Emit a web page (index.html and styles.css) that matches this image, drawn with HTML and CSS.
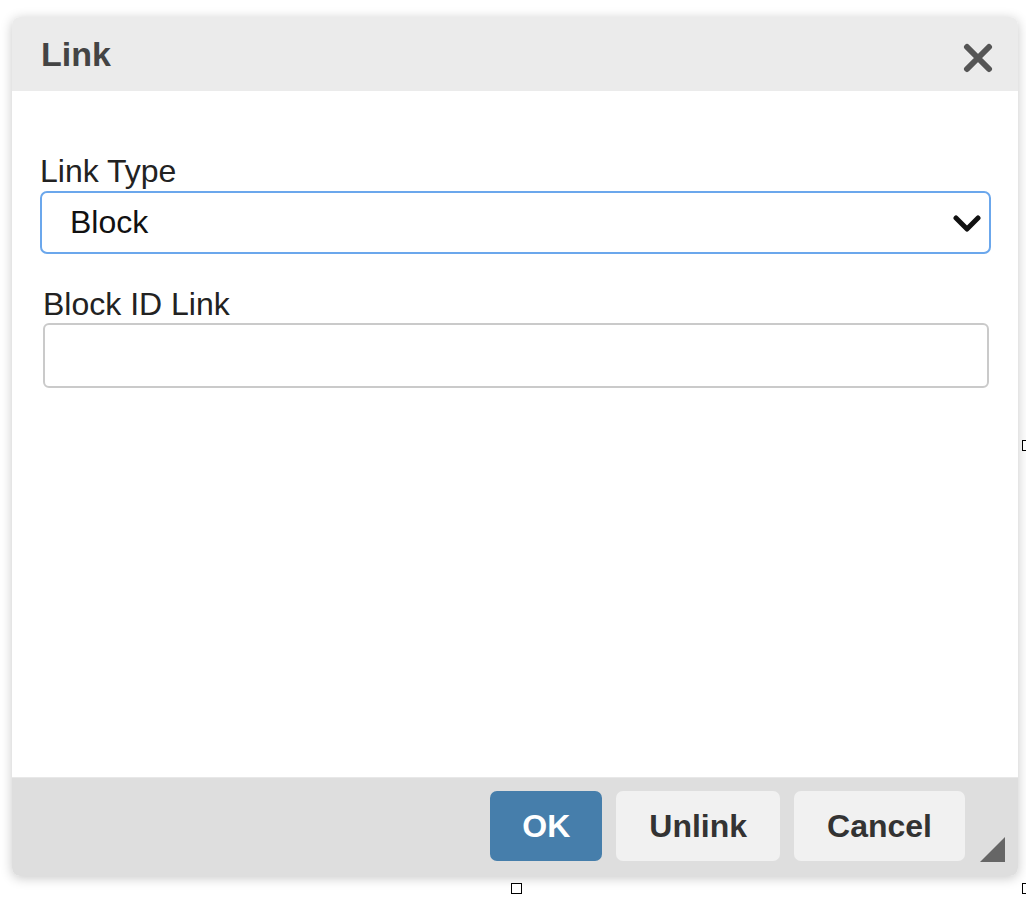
FILE: index.html
```html
<!DOCTYPE html>
<html lang="en">

<head>
  <meta charset="UTF-8">
  <meta name="viewport" content="width=device-width, initial-scale=1.0">
  <title>Link</title>
  <link rel="stylesheet" href="styles.css">
</head>

<body>
  <div class="page">
    <div class="dialog">
      <div class="dialog__head">
        <h2 class="dialog__title">Link</h2>
        <button class="close" type="button" aria-label="Close">
          <svg width="30" height="30" viewBox="0 0 30 30">
            <path d="M4 4 L26 26 M26 4 L4 26" stroke="#555" stroke-width="6" stroke-linecap="round" fill="none" />
          </svg>
        </button>
      </div>

      <div class="dialog__body">
        <div class="field">
          <label class="field__label">Link Type</label>
          <div class="select">
            <span>Block</span>
            <svg width="28" height="18" viewBox="0 0 28 18">
              <path d="M3 3 L14 14 L25 3" stroke="#111" stroke-width="5" stroke-linecap="round" stroke-linejoin="round" fill="none" />
            </svg>
          </div>
        </div>
        <div class="field field--inset">
          <label class="field__label" for="blockid">Block ID Link</label>
          <input type="text" id="blockid" class="text_input">
        </div>
      </div>

      <div class="dialog__foot">
        <button class="btn btn--primary" type="button">OK</button>
        <button class="btn" type="button">Unlink</button>
        <button class="btn" type="button">Cancel</button>
        <span class="resize"></span>
      </div>
    </div>

    <!-- resize handles of the element behind -->
    <span class="handle handle--bottom"></span>
    <span class="handle handle--corner"></span>
    <span class="handle handle--side"></span>
  </div>
</body>

</html>
```

FILE: styles.css
```css
body {
  margin: 0;
  background-color: #fff;
  font-family: "Liberation Sans", Arial, Helvetica, sans-serif;
}

.page {
  position: relative;
  width: 1026px;
  height: 904px;
  overflow: hidden;
  padding: 17px 0 0 12px;
  box-sizing: border-box;
}

.dialog {
  display: flex;
  flex-direction: column;
  width: 1006px;
  height: 859px;
  border-radius: 8px;
  overflow: hidden;
  background-color: #fff;
  box-shadow: 0 2px 12px rgba(0, 0, 0, 0.22);
}

.dialog__head {
  display: flex;
  align-items: center;
  justify-content: space-between;
  height: 74px;
  padding: 0 25px 0 29px;
  background-color: #ebebeb;
}

.dialog__title {
  margin: 0;
  font-size: 34px;
  font-weight: 700;
  color: #444;
}

.close {
  display: flex;
  padding: 0;
  margin-top: 8px;
  border: none;
  background: none;
  cursor: pointer;
}

.dialog__body {
  flex: 1;
  padding: 62px 27px 0 28px;
}

.field {
  display: flex;
  flex-direction: column;
  gap: 2px;
  margin-bottom: 32px;
}

.field--inset {
  padding: 0 2px 0 3px;
  gap: 1px;
}

.field__label {
  font-size: 32px;
  line-height: 36px;
  color: #222;
}

.select {
  display: flex;
  align-items: center;
  justify-content: space-between;
  height: 63px;
  padding: 0 8px 0 28px;
  box-sizing: border-box;
  border: 2px solid #6ba7ec;
  border-radius: 7px;
  font-size: 32px;
  color: #111;
}

.select svg {
  margin-top: 2px;
}

.text_input {
  height: 65px;
  box-sizing: border-box;
  border: 2px solid #cacaca;
  border-radius: 6px;
  font-size: 32px;
}

.dialog__foot {
  position: relative;
  display: flex;
  justify-content: flex-end;
  gap: 14px;
  height: 99px;
  padding: 13px 53px 15px 0;
  box-sizing: border-box;
  background-color: #dedede;
  border-top: 1px solid #e8e8e8;
}

.btn {
  height: 70px;
  padding: 0 33px;
  border: none;
  border-radius: 7px;
  background-color: #f1f1f1;
  font-family: inherit;
  font-size: 32px;
  font-weight: 700;
  color: #333;
  cursor: pointer;
}

.btn--primary {
  padding: 0 32px;
  background-color: #467eab;
  color: #fff;
}

.resize {
  position: absolute;
  right: 13px;
  bottom: 14px;
  width: 0;
  height: 0;
  border-left: 25px solid transparent;
  border-bottom: 25px solid #666;
}

.handle {
  position: absolute;
  width: 9px;
  height: 9px;
  border: 1px solid #000;
  background-color: #fff;
}

.handle--bottom {
  left: 511px;
  top: 883px;
}

.handle--corner {
  left: 1022px;
  top: 883px;
}

.handle--side {
  left: 1022px;
  top: 440px;
}
```
